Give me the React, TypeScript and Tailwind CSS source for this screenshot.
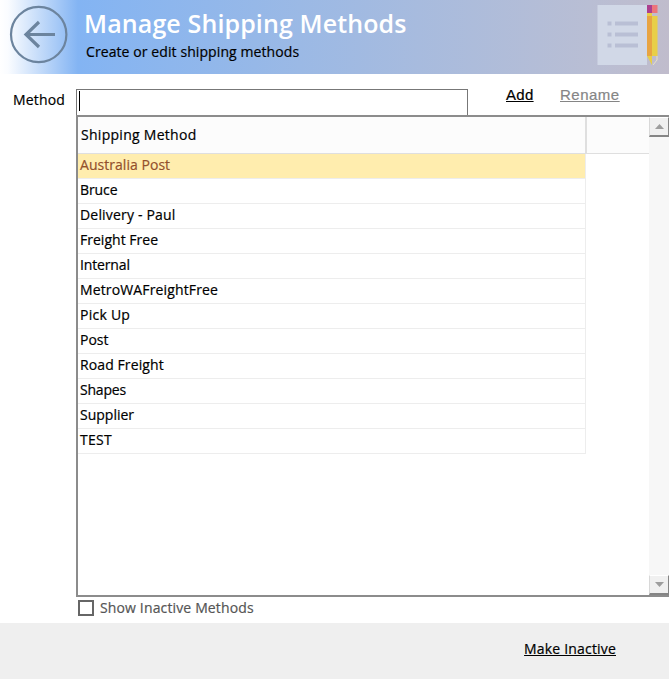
import { useState } from "react";

const methods = [
  { name: "Australia Post", tracking: "tracking-[0.04px]" },
  { name: "Bruce", tracking: "tracking-[-0.1px]" },
  { name: "Delivery - Paul", tracking: "tracking-[0.18px]" },
  { name: "Freight Free", tracking: "tracking-[0.02px]" },
  { name: "Internal", tracking: "tracking-[-0.15px]" },
  { name: "MetroWAFreightFree", tracking: "tracking-[0.14px]" },
  { name: "Pick Up", tracking: "tracking-[0.25px]" },
  { name: "Post", tracking: "tracking-[0px]" },
  { name: "Road Freight", tracking: "tracking-[0.1px]" },
  { name: "Shapes", tracking: "tracking-[-0.2px]" },
  { name: "Supplier", tracking: "tracking-[0px]" },
  { name: "TEST", tracking: "tracking-[0.3px]" },
];

function BackIcon() {
  return (
    <svg className="size-[60px]" viewBox="0 0 60 60" fill="none" stroke="#6c849e" aria-hidden="true">
      <circle cx="29.700" cy="29.500" r="27.700" strokeWidth="2.200" />
      <path d="M46 29.500H17M30 17L17 29.500L30 42" strokeWidth="3.200" />
    </svg>
  );
}

function NotepadIcon() {
  return (
    <svg className="h-[62px] w-[62px]" viewBox="0 0 62 62" aria-hidden="true">
      <path d="M0.500 1H50V61H0.500Z" fill="#d1d8e7" />
      <g fill="#b9bfd5">
        <path d="M10.500 17.500h4v4h-4zM10.500 28.500h4v4h-4zM10.500 39.500h4v4h-4z" />
        <path d="M18 17.500h23v4h-23zM18 28.500h23v4h-23zM18 39.500h23v4h-23z" />
      </g>
      <path d="M50 1h5v8h-5z" fill="#ac3f8e" />
      <path d="M55 1h5.500v8h-5.500z" fill="#ec757b" />
      <path d="M50 9h5v3h-5zM55 12h5.500v40h-5.500z" fill="#e8cf48" />
      <path d="M55 9h5.500v3h-5.500z" fill="#c1bccd" />
      <path d="M50 12h5v40h-5z" fill="#e8a443" />
      <path d="M50 52h5v9z" fill="#e8cf48" />
      <path d="M60 52v4l-4 5" fill="none" stroke="#e9e2c5" />
    </svg>
  );
}

function ScrollButton({ down = false }: { down?: boolean }) {
  return (
    <button
      type="button"
      aria-label={down ? "Scroll down" : "Scroll up"}
      className="flex h-5 w-5 shrink-0 items-center justify-center border-t border-r border-b-2 border-l border-t-white border-r-[#858585] border-b-[#858585] border-l-[#d8d8d8] bg-[#f0f0f0]"
    >
      <svg className="h-[5px] w-[9px]" viewBox="0 0 9 5" aria-hidden="true">
        <path d={down ? "M0 0H9L4.500 5Z" : "M0 5H9L4.500 0Z"} fill="#9d9d9d" />
      </svg>
    </button>
  );
}

export default function App() {
  const [selected, setSelected] = useState("Australia Post");
  const [method, setMethod] = useState("");
  const [showInactive, setShowInactive] = useState(false);

  return (
    <div className="flex h-[679px] w-[669px] flex-col overflow-hidden bg-white font-['Open_Sans',sans-serif] text-[14px] text-black [-webkit-text-stroke:0.2px]">
      <header className="flex h-[74px] shrink-0 bg-[linear-gradient(90deg,#ffffff_0px,#fafcff_8px,#83b4f3_78px,#9bb9e5_300px,#b9bed4_590px,#c0bccc_669px)]">
        <button type="button" aria-label="Back" className="mt-[5px] ml-[9px] h-[60px]">
          <BackIcon />
        </button>
        <div className="ml-[15px] flex-1 whitespace-nowrap">
          <h1 className="mt-[6px] text-[25px] leading-[35px] font-semibold tracking-[0.12px] text-white [-webkit-text-stroke:0px]">Manage Shipping Methods</h1>
          <p className="ml-[2px] leading-[22px] tracking-[0.09px]">Create or edit shipping methods</p>
        </div>
        <div className="mt-1 mr-[10px]">
          <NotepadIcon />
        </div>
      </header>

      <div className="flex h-[41px] shrink-0 pt-[15px]">
        <label htmlFor="method" className="w-[76px] pl-[13px] leading-[22px] tracking-[0.15px]">Method</label>
        <div className="flex h-[26px] w-[392px] items-start border border-b-0 border-[#777777] pl-[2px]">
          <span className="mt-px h-[20px] w-px bg-black" />
          <input
            id="method"
            value={method}
            onChange={(event) => setMethod(event.target.value)}
            className="h-[24px] min-w-0 flex-1 outline-none"
          />
        </div>
        <div className="flex items-start font-['Liberation_Sans',sans-serif] text-[15px] leading-[12px]">
          <button type="button" className="ml-[38px] w-[28px] text-left tracking-[0.3px] underline">Add</button>
          <button type="button" className="ml-[26px] tracking-[0.5px] text-[#858585] underline">Rename</button>
        </div>
      </div>

      <div className="ml-[76px] flex h-[482px] shrink-0 border-t-2 border-b-2 border-l-2 border-t-[#8c8c8c] border-b-[#8c8c8c] border-l-[#8c8c8c]">
        <div className="flex-1">
          <div className="flex h-[37px] border-b border-[#dfdfdf] bg-[#fcfcfc]">
            <div className="w-[509px] border-r-2 border-[#dfdfdf] pl-[3px] leading-[36px] tracking-[0.28px]">Shipping Method</div>
          </div>
          {methods.map(({ name, tracking }) => (
            <div
              key={name}
              onClick={() => setSelected(name)}
              className={`h-[25px] w-[508px] border-r border-b border-[#ededed] pl-[2px] leading-[22px] ${tracking} ${
                selected === name ? "bg-[#ffedae] text-[#93502c]" : "text-black"
              }`}
            >
              {name}
            </div>
          ))}
        </div>
        <div className="flex w-5 flex-col justify-between bg-[#f7f7f7]">
          <ScrollButton />
          <ScrollButton down />
        </div>
      </div>

      <label className="ml-[78px] flex h-[26px] shrink-0 items-start text-[#555555]">
        <input
          type="checkbox"
          checked={showInactive}
          onChange={(event) => setShowInactive(event.target.checked)}
          className="mt-[3px] h-4 w-4 appearance-none border-2 border-[#666666] bg-white"
        />
        <span className="ml-[6px] leading-[21px] tracking-[0.14px]">Show Inactive Methods</span>
      </label>

      <footer className="flex flex-1 items-start justify-end bg-[#efefef] pt-[15px] pr-[53px]">
        <button type="button" className="leading-[22px] font-medium tracking-[0.18px] underline">Make Inactive</button>
      </footer>
    </div>
  );
}
